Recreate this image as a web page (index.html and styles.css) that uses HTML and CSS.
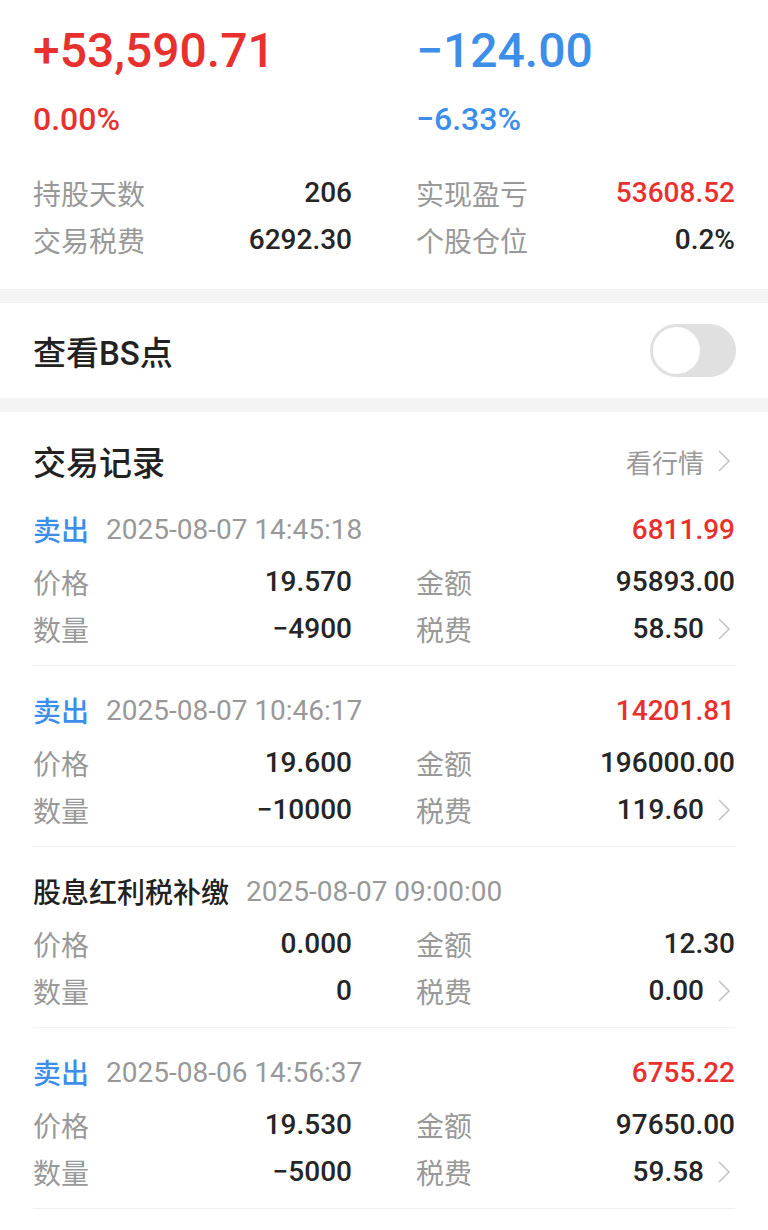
FILE: index.html
```html
<!DOCTYPE html>
<html lang="zh-CN">
<head>
  <meta charset="UTF-8">
  <title>持仓详情</title>
  <link rel="stylesheet" href="styles.css">
</head>
<body>

<!-- 收益概览 -->
<div class="summary">
  <div class="pair">
    <div class="big red">+53,590.71</div>
    <div class="big blue">−124.00</div>
  </div>
  <div class="pair pct">
    <div class="red">0.00%</div>
    <div class="blue">−6.33%</div>
  </div>
  <div class="pair stats">
    <div class="kv"><span class="k">持股天数</span><span class="v">206</span></div>
    <div class="kv"><span class="k">实现盈亏</span><span class="v red">53608.52</span></div>
    <div class="kv"><span class="k">交易税费</span><span class="v">6292.30</span></div>
    <div class="kv"><span class="k">个股仓位</span><span class="v">0.2%</span></div>
  </div>
</div>

<div class="band"></div>

<div class="bs-row">
  <span>查看BS点</span>
  <div class="switch"><div class="knob"></div></div>
</div>

<div class="band"></div>

<!-- 交易记录 -->
<div class="trades">
  <div class="trades-head">
    <h2>交易记录</h2>
    <a class="more">看行情 <svg class="chev" viewBox="0 0 14 24"><path d="M2 2l10 10-10 10"/></svg></a>
  </div>

  <div class="record">
    <div class="rec-head">
      <span class="type blue">卖出</span>
      <span class="time">2025-08-07 14:45:18</span>
      <span class="profit red">6811.99</span>
    </div>
    <div class="pair">
      <div class="kv"><span class="k">价格</span><span class="v">19.570</span></div>
      <div class="kv"><span class="k">金额</span><span class="v">95893.00</span></div>
      <div class="kv"><span class="k">数量</span><span class="v">−4900</span></div>
      <div class="kv"><span class="k">税费</span><span class="v">58.50<svg class="chev" viewBox="0 0 14 24"><path d="M2 2l10 10-10 10"/></svg></span></div>
    </div>
  </div>

  <div class="record">
    <div class="rec-head">
      <span class="type blue">卖出</span>
      <span class="time">2025-08-07 10:46:17</span>
      <span class="profit red">14201.81</span>
    </div>
    <div class="pair">
      <div class="kv"><span class="k">价格</span><span class="v">19.600</span></div>
      <div class="kv"><span class="k">金额</span><span class="v">196000.00</span></div>
      <div class="kv"><span class="k">数量</span><span class="v">−10000</span></div>
      <div class="kv"><span class="k">税费</span><span class="v">119.60<svg class="chev" viewBox="0 0 14 24"><path d="M2 2l10 10-10 10"/></svg></span></div>
    </div>
  </div>

  <div class="record">
    <div class="rec-head">
      <span class="type">股息红利税补缴</span>
      <span class="time">2025-08-07 09:00:00</span>
    </div>
    <div class="pair">
      <div class="kv"><span class="k">价格</span><span class="v">0.000</span></div>
      <div class="kv"><span class="k">金额</span><span class="v">12.30</span></div>
      <div class="kv"><span class="k">数量</span><span class="v">0</span></div>
      <div class="kv"><span class="k">税费</span><span class="v">0.00<svg class="chev" viewBox="0 0 14 24"><path d="M2 2l10 10-10 10"/></svg></span></div>
    </div>
  </div>

  <div class="record">
    <div class="rec-head">
      <span class="type blue">卖出</span>
      <span class="time">2025-08-06 14:56:37</span>
      <span class="profit red">6755.22</span>
    </div>
    <div class="pair">
      <div class="kv"><span class="k">价格</span><span class="v">19.530</span></div>
      <div class="kv"><span class="k">金额</span><span class="v">97650.00</span></div>
      <div class="kv"><span class="k">数量</span><span class="v">−5000</span></div>
      <div class="kv"><span class="k">税费</span><span class="v">59.58<svg class="chev" viewBox="0 0 14 24"><path d="M2 2l10 10-10 10"/></svg></span></div>
    </div>
  </div>
</div>

</body>
</html>
```

FILE: styles.css
```css
body { margin: 0; background: #fff; color: #222; font-family: Roboto, "Noto Sans CJK SC", sans-serif; font-size: 28px; }
.red { color: #e8312f; }
.blue { color: #3d8ee9; }

.pair { display: grid; grid-template-columns: 1fr 1fr; column-gap: 64px; }
.kv { display: flex; justify-content: space-between; align-items: center; height: 47px; }
.k { color: #999; }
.v { display: flex; align-items: center; font-weight: 500; color: #262626; }
.v.red { color: #e8312f; }

.summary { padding: 23px 33px 26px; }
.big { font-size: 48px; font-weight: 500; line-height: 56px; }
.pct { margin-top: 20px; font-size: 32px; font-weight: 500; line-height: 40px; }
.stats { margin-top: 30px; }

.band { height: 14px; background: #f4f4f4; }

.bs-row { display: flex; justify-content: space-between; align-items: center; height: 95px; padding: 0 32px 0 33px; font-size: 33px; font-weight: 500; }
.switch { width: 86px; height: 53px; border-radius: 27px; background: #e0e0e0; padding: 3px; box-sizing: border-box; }
.knob { width: 47px; height: 47px; border-radius: 50%; background: #fff; }

.trades { padding: 27px 33px 0; }
.trades-head { display: flex; justify-content: space-between; align-items: center; height: 44px; margin-bottom: 2px; }
.trades-head h2 { margin: 0; font-size: 33px; font-weight: 500; }
.more { display: flex; align-items: center; color: #999; font-size: 26px; }

.chev { width: 14px; height: 24px; margin-left: 13px; margin-right: 4px; fill: none; stroke: #c4c4c4; stroke-width: 1.6; }

.record { padding: 22px 0 13px; border-bottom: 1px solid #efefef; }
.rec-head { display: flex; align-items: center; height: 44px; margin-bottom: 7px; }
.type { font-weight: 500; margin-right: 17px; }
.time { color: #999; }
.profit { margin-left: auto; font-weight: 500; }
```
